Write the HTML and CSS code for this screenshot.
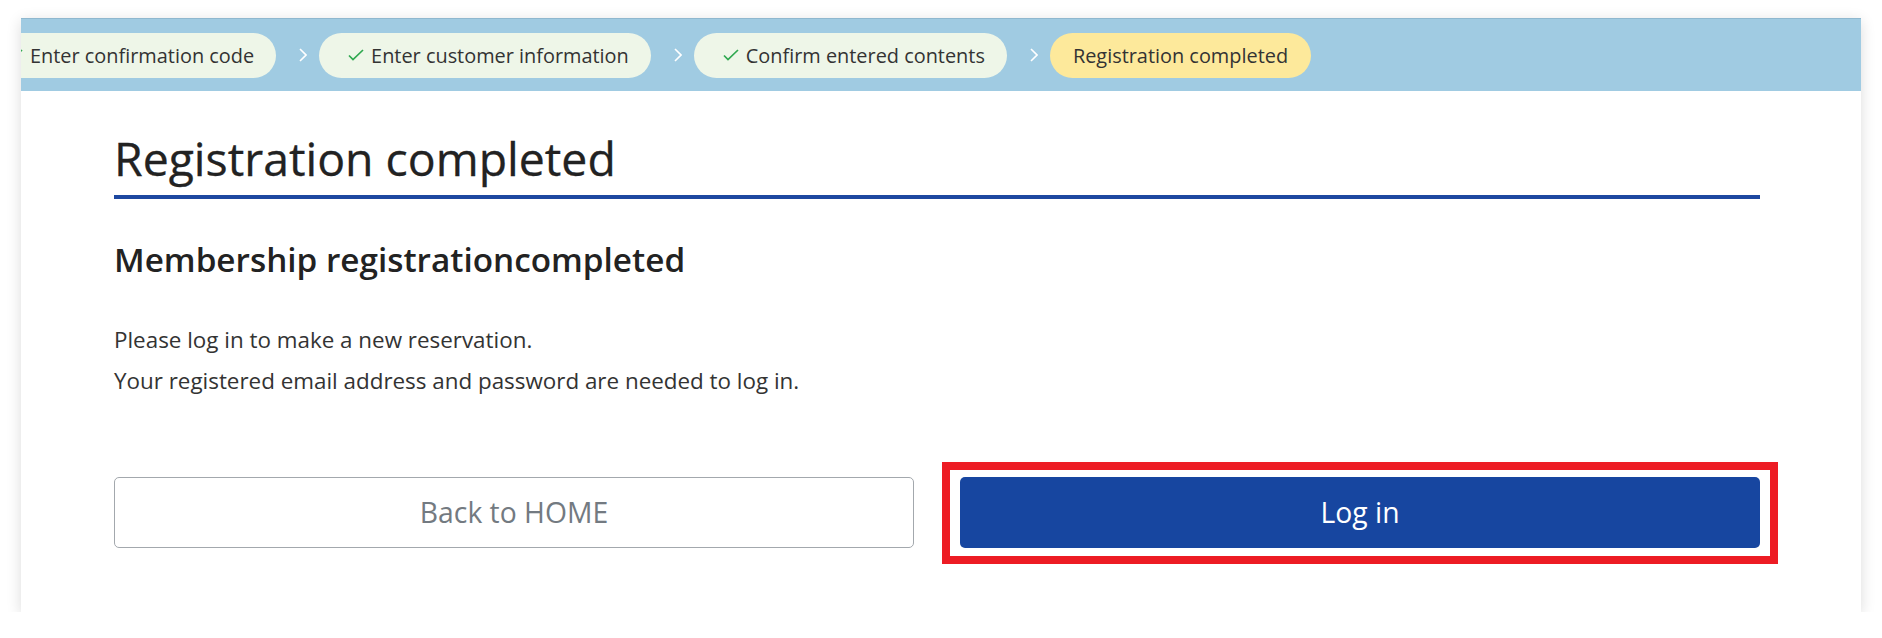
FILE: index.html
```html
<!DOCTYPE html>
<html lang="en">
<head>
<meta charset="utf-8">
<title>Registration completed</title>
<link rel="stylesheet" href="styles.css">
</head>
<body>
<div class="panel">
  <nav class="stepbar">
    <ol class="steps">
      <li class="step done"><svg class="check" viewBox="0 0 16 12" width="16" height="12"><polyline points="1,6.5 5,10.5 15,1"/></svg>Enter confirmation code</li>
      <li class="sep"><svg viewBox="0 0 8 14" width="8" height="14"><polyline points="1,1 7,7 1,13"/></svg></li>
      <li class="step done"><svg class="check" viewBox="0 0 16 12" width="16" height="12"><polyline points="1,6.5 5,10.5 15,1"/></svg>Enter customer information</li>
      <li class="sep"><svg viewBox="0 0 8 14" width="8" height="14"><polyline points="1,1 7,7 1,13"/></svg></li>
      <li class="step done"><svg class="check" viewBox="0 0 16 12" width="16" height="12"><polyline points="1,6.5 5,10.5 15,1"/></svg>Confirm entered contents</li>
      <li class="sep"><svg viewBox="0 0 8 14" width="8" height="14"><polyline points="1,1 7,7 1,13"/></svg></li>
      <li class="step current">Registration completed</li>
    </ol>
  </nav>
  <main class="content">
    <h1 class="title">Registration completed</h1>
    <h2 class="subtitle">Membership registrationcompleted</h2>
    <p class="message">Please log in to make a new reservation.<br>Your registered email address and password are needed to log in.</p>
    <div class="actions">
      <a class="btn btn-outline" href="#">Back to HOME</a>
      <a class="btn btn-primary highlighted" href="#">Log in</a>
    </div>
  </main>
</div>
</body>
</html>
```
FILE: styles.css
```css
* { box-sizing: border-box; }
html, body { margin: 0; padding: 0; background: #ffffff; }
body {
  font-family: "Open Sans", "Noto Sans", sans-serif;
  color: #212529;
}
.panel {
  margin: 18px 21px 0 21px;
  background: #ffffff;
  box-shadow: 0 3px 14px rgba(0, 0, 0, 0.14);
}
.stepbar {
  height: 73px;
  background: #a0cbe2;
  border-top: 1px solid #8fb8cf;
  overflow: hidden;
  display: flex;
  align-items: center;
}
.steps {
  list-style: none;
  margin: 0 0 0 -43px;
  padding: 0;
  display: flex;
  align-items: center;
  white-space: nowrap;
}
.step {
  height: 45px;
  border-radius: 23px;
  display: flex;
  align-items: center;
  padding: 0 22px 0 29px;
  font-size: 19.9px;
  color: #333333;
  background: #eef6e8;
}
.step.current {
  background: #fde99b;
  padding: 0 23px;
}
.check {
  margin-right: 7px;
  fill: none;
  stroke: #2fa84f;
  stroke-width: 1.7;
}
.sep {
  display: flex;
  align-items: center;
  padding: 0 12px 0 23px;
}
.sep svg {
  fill: none;
  stroke: #ffffff;
  stroke-width: 1.6;
}
.content {
  padding: 0 101px 64px 93px;
}
.title {
  margin: 40px 0 0 0;
  font-size: 46.4px;
  font-weight: 500;
  line-height: 1.2;
  padding-bottom: 8px;
  border-bottom: 4px solid #1d48a0;
  color: #222222;
  -webkit-text-stroke: 0.3px #222222;
}
.subtitle {
  margin: 41px 0 0 0;
  font-size: 33.3px;
  font-weight: 600;
  line-height: 1.2;
  color: #222222;
}
.message {
  margin: 39px 0 0 0;
  font-size: 22.4px;
  line-height: 41px;
  color: #333333;
}
.actions {
  margin-top: 76px;
  display: grid;
  grid-template-columns: 1fr 1fr;
  gap: 46px;
}
.btn {
  height: 71px;
  display: flex;
  align-items: center;
  justify-content: center;
  border-radius: 5px;
  font-size: 28.3px;
  text-decoration: none;
}
.btn-outline {
  border: 1.5px solid #a3a8ad;
  color: #737a81;
  background: #ffffff;
}
.btn-primary {
  background: #1746a0;
  color: #ffffff;
}
.highlighted { position: relative; }
.highlighted::after {
  content: "";
  position: absolute;
  top: -15px;
  bottom: -16px;
  left: -18px;
  right: -18px;
  border: 8px solid #ed1c24;
  pointer-events: none;
}
```
